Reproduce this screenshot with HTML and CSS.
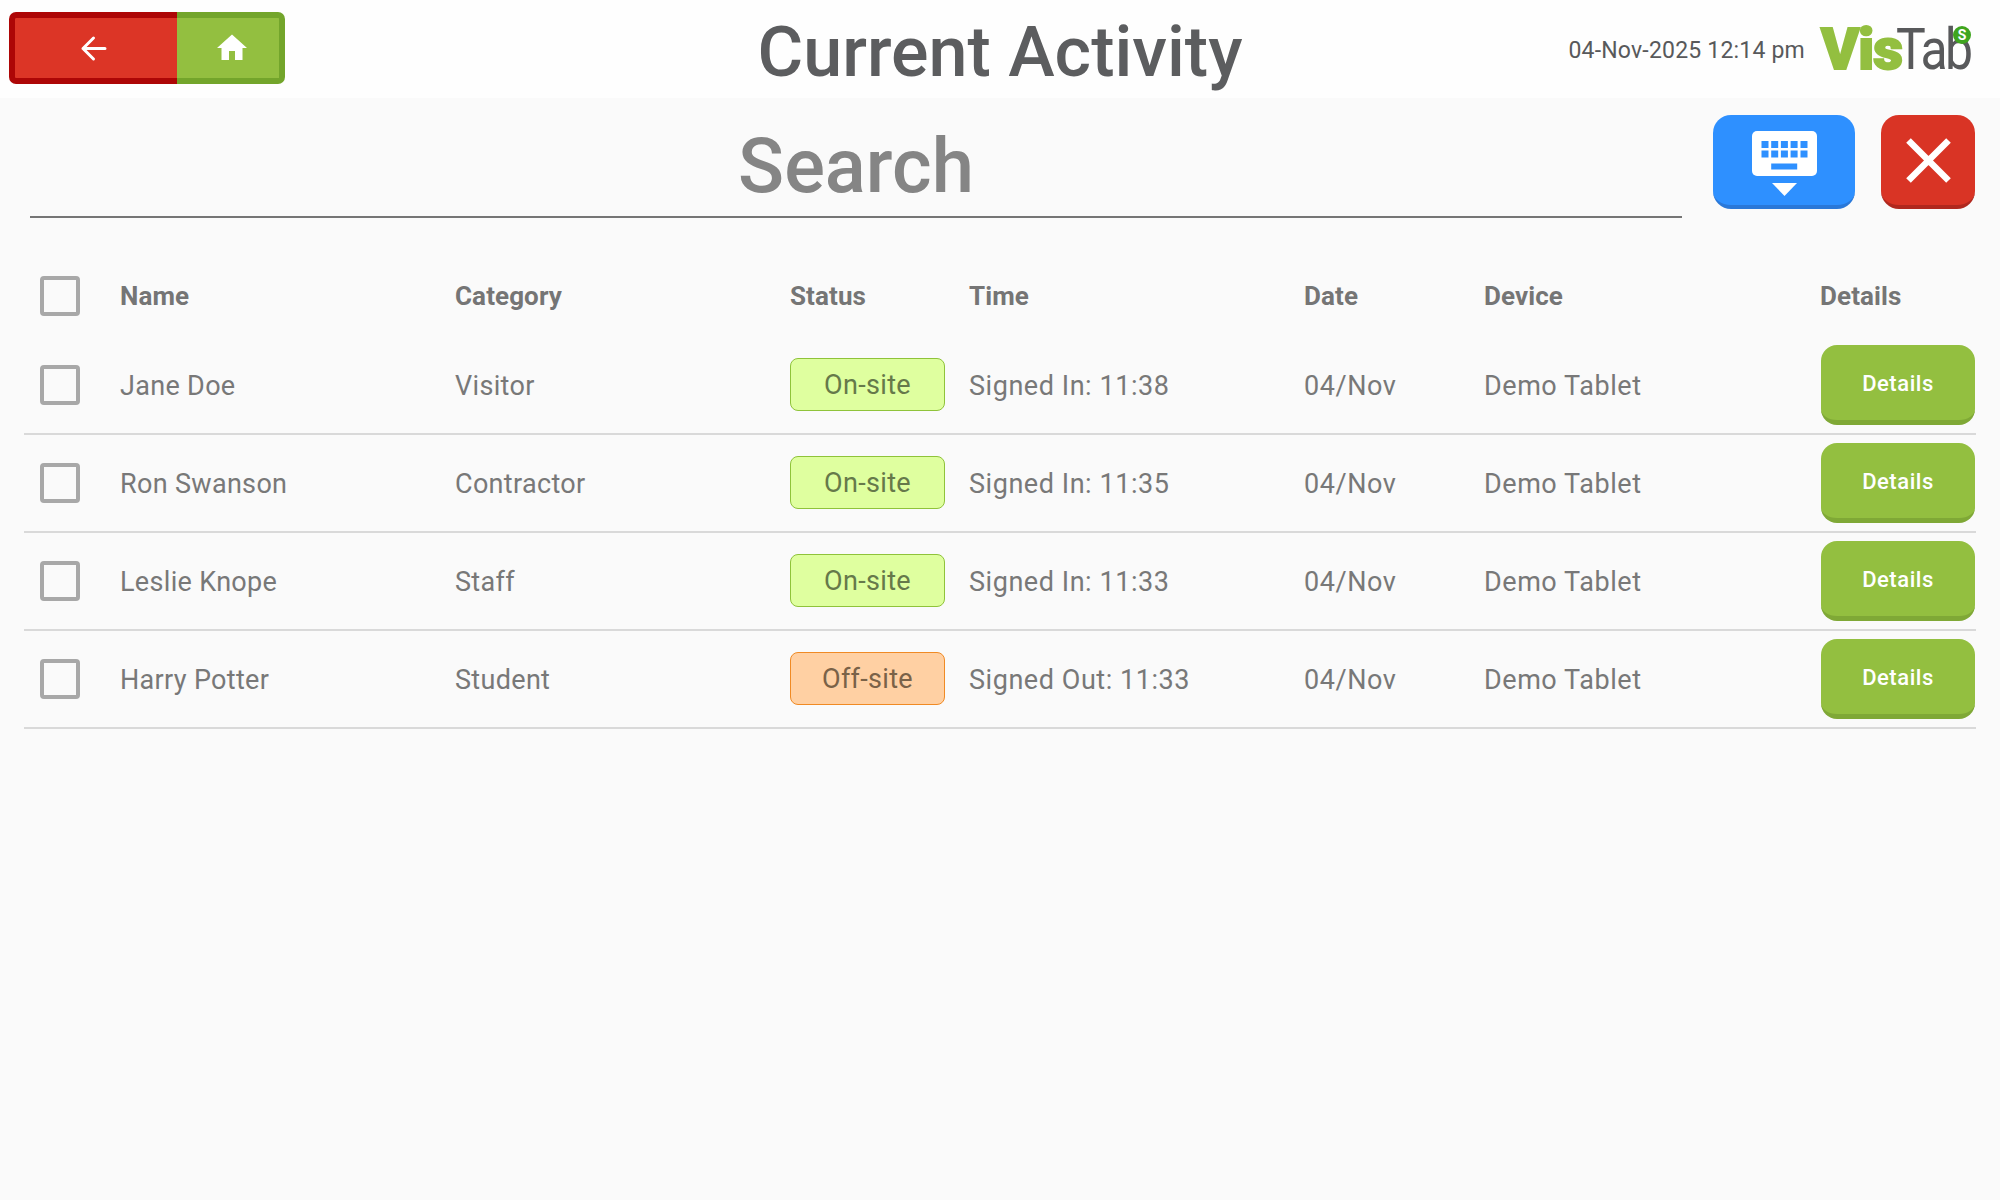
FILE: index.html
```html
<!DOCTYPE html>
<html lang="en">
<head>
    <meta charset="UTF-8">
    <title>Current Activity</title>
    <link rel="stylesheet" href="styles.css">
</head>
<body>
    <div class="headerContainer">
        <div class="navButtons">
            <button class="navBack">
                <svg width="27" height="27" viewBox="0 0 27 27"><path d="M25 13.5H3M13.5 3L3 13.5 13.5 24" stroke="#fff" stroke-width="3" stroke-linecap="round" stroke-linejoin="round" fill="none"/></svg>
            </button>
            <button class="navHome">
                <svg width="36" height="36" viewBox="0 0 24 24"><path d="M10 20v-6h4v6h5v-8h3L12 3 2 12h3v8z" fill="#fff"/></svg>
            </button>
        </div>
        <h1 class="pageTitle">Current Activity</h1>
        <div class="headerRight">
            <span class="clock">04-Nov-2025 12:14 pm</span>
            <div class="logo"><span class="logoVis">Vis</span><span class="logoTab">Tab</span><span class="logoBadge">S</span></div>
        </div>
    </div>
    <div class="searchRow">
        <div class="searchBox">Search</div>
        <button class="keyboardButton">
            <svg width="65" height="65" viewBox="0 0 65 65">
                <rect width="65" height="45" rx="5" fill="#fff"/>
                <g fill="#2e90ff">
                    <rect x="9.5" y="10" width="7" height="7"/><rect x="19.2" y="10" width="7" height="7"/><rect x="28.9" y="10" width="7" height="7"/><rect x="38.6" y="10" width="7" height="7"/><rect x="48.5" y="10" width="7" height="7"/>
                    <rect x="9.5" y="19.5" width="7" height="7"/><rect x="19.2" y="19.5" width="7" height="7"/><rect x="28.9" y="19.5" width="7" height="7"/><rect x="38.6" y="19.5" width="7" height="7"/><rect x="48.5" y="19.5" width="7" height="7"/>
                    <rect x="19.2" y="32.5" width="26" height="6"/>
                </g>
                <path d="M20 52h25L32.5 65z" fill="#fff"/>
            </svg>
        </button>
        <button class="clearButton">
            <svg width="45" height="45" viewBox="0 0 45 45"><path d="M2.5 2.5l40 40M42.5 2.5l-40 40" stroke="#fff" stroke-width="6.5" fill="none"/></svg>
        </button>
    </div>
    <div class="activityTable">
        <div class="row headRow">
            <span class="checkbox"></span><span>Name</span><span>Category</span><span>Status</span><span>Time</span><span>Date</span><span>Device</span><span>Details</span>
        </div>
        <div class="row">
            <span class="checkbox"></span><span>Jane Doe</span><span>Visitor</span><span class="status onSite">On-site</span><span>Signed In: 11:38</span><span>04/Nov</span><span>Demo Tablet</span><button class="detailsButton">Details</button>
        </div>
        <div class="row">
            <span class="checkbox"></span><span>Ron Swanson</span><span>Contractor</span><span class="status onSite">On-site</span><span>Signed In: 11:35</span><span>04/Nov</span><span>Demo Tablet</span><button class="detailsButton">Details</button>
        </div>
        <div class="row">
            <span class="checkbox"></span><span>Leslie Knope</span><span>Staff</span><span class="status onSite">On-site</span><span>Signed In: 11:33</span><span>04/Nov</span><span>Demo Tablet</span><button class="detailsButton">Details</button>
        </div>
        <div class="row">
            <span class="checkbox"></span><span>Harry Potter</span><span>Student</span><span class="status offSite">Off-site</span><span>Signed Out: 11:33</span><span>04/Nov</span><span>Demo Tablet</span><button class="detailsButton">Details</button>
        </div>
    </div>
</body>
</html>
```
FILE: styles.css
```css
* {
    box-sizing: border-box;
}

body {
    margin: 0;
    height: 1200px;
    overflow: hidden;
    background: #fafafa;
    color: #787878;
    font-family: Roboto, sans-serif;
}

button {
    font-family: inherit;
    padding: 0;
    cursor: pointer;
}

.headerContainer {
    height: 98px;
    background: #fefefe;
    display: grid;
    grid-template-columns: 1fr auto 1fr;
    align-items: center;
    padding: 0 9px;
}

.navButtons {
    display: flex;
    width: 276px;
    height: 72px;
    margin-bottom: 2px;
}

.navBack {
    width: 168px;
    padding-right: 5px;
    background: #dc3526;
    border: 6px solid #ad0606;
    border-right: none;
    border-radius: 7px 0 0 7px;
}

.navHome {
    width: 108px;
    padding-left: 7px;
    background: #93bf40;
    border: 6px solid #73a52b;
    border-left: none;
    border-radius: 0 7px 7px 0;
}

.navBack svg, .navHome svg {
    display: block;
    margin: auto;
}

.pageTitle {
    margin: 5px 0 0;
    font-size: 70px;
    font-weight: 500;
    color: #5c5d5f;
}

.headerRight {
    display: flex;
    align-items: center;
    justify-content: flex-end;
    gap: 16px;
    padding-right: 20px;
}

.clock {
    margin-top: 2px;
    font-size: 23px;
    letter-spacing: 0.2px;
    color: #58595b;
}

.logo {
    position: relative;
    display: flex;
    width: 150px;
    height: 60px;
    font-size: 58px;
    line-height: 60px;
    margin-bottom: 1px;
}

.logoVis {
    color: #93bf40;
    font-weight: 900;
    letter-spacing: -1px;
    -webkit-text-stroke: 2px #93bf40;
}

.logoTab {
    color: #58595b;
    font-weight: 400;
    letter-spacing: -3px;
    margin-left: -6px;
    transform: scaleX(0.86);
    transform-origin: left center;
}

.logoBadge {
    position: absolute;
    top: 7px;
    right: 0;
    width: 18px;
    height: 18px;
    border-radius: 50%;
    background: #3fa51f;
    color: #fff;
    font-size: 14px;
    font-weight: 700;
    line-height: 18px;
    text-align: center;
}

.searchRow {
    display: flex;
    align-items: flex-start;
    padding: 17px 25px 0 30px;
    height: 121px;
}

.searchBox {
    flex: 1;
    height: 103px;
    border-bottom: 2px solid #757575;
    font-size: 76px;
    font-weight: 500;
    line-height: 102px;
    text-align: center;
    color: #858585;
}

.keyboardButton {
    width: 142px;
    height: 94px;
    margin-left: 31px;
    background: #2e90ff;
    border: none;
    border-bottom: 4px solid #2a78d8;
    border-radius: 18px;
}

.clearButton {
    width: 94px;
    height: 94px;
    margin-left: 26px;
    background: #d93425;
    border: none;
    border-bottom: 4px solid #b0281e;
    border-radius: 18px;
}

.keyboardButton svg {
    display: block;
    margin: 7px auto 0;
}

.clearButton svg {
    display: block;
    margin: 0 auto;
}

.activityTable {
    margin: 0 24px;
    padding-top: 36px;
}

.row {
    display: grid;
    grid-template-columns: 96px 335px 335px 179px 335px 180px 336px 1fr;
    align-items: center;
    height: 98px;
    font-size: 27px;
    border-bottom: 2px solid #d9d9d9;
    letter-spacing: 0.32px;
}

.row > span {
    padding-top: 1px;
}

.row > :nth-child(n+5) {
    letter-spacing: 0.55px;
}

.headRow {
    height: 82px;
    border-bottom: none;
    font-size: 26px;
    font-weight: 700;
    color: #757575;
    letter-spacing: 0.1px;
}

.headRow > span {
    padding-top: 0;
}

.headRow > :nth-child(n+5) {
    letter-spacing: 0.1px;
}

.checkbox {
    width: 40px;
    height: 40px;
    margin-left: 16px;
    border: 4px solid #a8a8a8;
    border-radius: 4px;
}

.status {
    width: 155px;
    height: 53px;
    margin-bottom: 1px;
    line-height: 51px;
    text-align: center;
    border-radius: 8px;
}

.onSite {
    background: #dfff9f;
    border: 1px solid #8fc33a;
    color: #66794a;
}

.offSite {
    background: #ffd0a3;
    border: 1px solid #f08a24;
    color: #7a6248;
}

.detailsButton {
    width: 154px;
    height: 80px;
    margin-left: 1px;
    padding-top: 2px;
    background: #93bf40;
    color: #fff;
    font-size: 22px;
    font-weight: 500;
    letter-spacing: 0;
    border: none;
    border-bottom: 5px solid #7fa836;
    border-radius: 16px;
}
```
